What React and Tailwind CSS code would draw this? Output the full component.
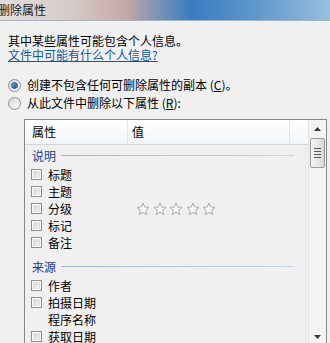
import React from "react";

const font = "[font-family:'Noto_Sans_CJK_SC','Liberation_Sans',sans-serif]";

function Checkbox() {
  return (
    <div className="w-[11px] h-[11px] border border-[#8e8f8f] bg-white p-[1px] shrink-0">
      <div className="w-full h-full bg-gradient-to-br from-[#d4d4d4] to-[#f6f6f6] border border-[#e0e0e0]" />
    </div>
  );
}

function Star() {
  return (
    <svg width="14" height="14" viewBox="0 0 14 14" className="shrink-0">
      <polygon
        points="7,1 8.7,5 13,5.3 9.7,8.2 10.7,12.6 7,10.3 3.3,12.6 4.3,8.2 1,5.3 5.3,5"
        fill="#fbfbfb"
        stroke="#a8a8a8"
        strokeWidth="1"
        strokeLinejoin="round"
      />
    </svg>
  );
}

function Row({ label, check = true, stars = false }) {
  return (
    <div className="flex h-[17px] items-center shrink-0">
      <div className="w-[104px] flex items-center pl-[6px] gap-[6px]">
        {check ? <Checkbox /> : <div className="w-[11px] shrink-0" />}
        <span className="text-[12px] leading-[17px] text-black">{label}</span>
      </div>
      {stars && (
        <div className="flex pl-[7px] gap-[2.5px]">
          <Star />
          <Star />
          <Star />
          <Star />
          <Star />
        </div>
      )}
    </div>
  );
}

function Group({ label, className = "" }) {
  return (
    <div className={`flex h-[21px] items-center pl-[7px] pr-[11px] shrink-0 ${className}`}>
      <span className="text-[12px] leading-[14px] text-[#1e3c8c]">{label}</span>
      <div className="flex-1 h-px ml-[5px] bg-gradient-to-r from-[#9fb6cf] to-[#c7d6e4]" />
    </div>
  );
}

function Radio({ checked }) {
  return (
    <div className="w-[13px] h-[13px] rounded-full border border-[#8e8f8f] bg-gradient-to-br from-[#d8d8d8] to-[#fbfbfb] flex items-center justify-center shrink-0">
      {checked && (
        <div className="w-[7px] h-[7px] rounded-full bg-gradient-to-br from-[#6fa4e0] to-[#1e4e9c] border border-[#2b5aa0]" />
      )}
    </div>
  );
}

export default function App() {
  return (
    <div className={`w-[330px] h-[343px] overflow-hidden bg-[#f0f0f0] ${font} text-black`}>
      <div className="h-[21px] border-b border-[#a9b4c0] bg-[linear-gradient(to_right,#e2dedc_0%,#d6cac8_22%,#c6a8a6_38%,#7a93b8_48%,#3a7cbf_58%,#5f99cc_78%,#98bfe0_100%)] flex items-center">
        <span className="ml-[-2px] text-[12px] leading-[14px] text-[#1a1a1a]">删除属性</span>
      </div>
      <div className="pl-[8px] pt-[13px]">
        <div className="text-[12px] leading-[14px] h-[14px]">其中某些属性可能包含个人信息。</div>
        <div className="text-[12px] leading-[14px] h-[14px] text-[#0b5aa6] underline underline-offset-[1px]">
          文件中可能有什么个人信息?
        </div>
        <div className="mt-[14px] flex items-center h-[18px] gap-[6px]">
          <Radio checked />
          <span className="text-[12px] leading-[14px]">
            创建不包含任何可删除属性的副本 (<u>C</u>)。
          </span>
        </div>
        <div className="flex items-center h-[18px] gap-[6px]">
          <Radio />
          <span className="text-[12px] leading-[14px]">
            从此文件中删除以下属性 (<u>R</u>):
          </span>
        </div>
      </div>
      <div className="ml-[24px] mr-[3px] mt-[7px] h-[228px] border border-[#828790] bg-[#f0f0f0] flex overflow-hidden">
        <div className="flex-1 flex flex-col overflow-hidden">
          <div className="h-[25px] flex border-b border-[#d5d5d5] bg-gradient-to-b from-white to-[#f4f5f7] shrink-0">
            <div className="w-[103px] border-r border-[#e3e5e8] flex items-center pl-[7px] text-[12px]">属性</div>
            <div className="w-[162px] border-r border-[#e3e5e8] flex items-center pl-[4px] text-[12px]">值</div>
            <div className="flex-1" />
          </div>
          <div className="flex-1 flex flex-col border-r border-[#e8e8e8] mr-[2px]">
            <Group label="说明" />
            <Row label="标题" />
            <Row label="主题" />
            <Row label="分级" stars />
            <Row label="标记" />
            <Row label="备注" />
            <Group label="来源" className="mt-[5px]" />
            <Row label="作者" />
            <Row label="拍摄日期" />
            <Row label="程序名称" check={false} />
            <Row label="获取日期" />
          </div>
        </div>
        <div className="w-[18px] border-l border-[#e2e2e2] bg-[#f3f3f3] flex flex-col items-center">
          <div className="h-[18px] w-full flex items-center justify-center">
            <svg width="7" height="4" viewBox="0 0 7 4">
              <polygon points="3.5,0 7,4 0,4" fill="#3a3a3a" />
            </svg>
          </div>
          <div className="w-[15px] h-[30px] rounded-[2px] border border-[#9c9c9c] bg-gradient-to-r from-[#f4f4f4] via-[#e8e8e8] to-[#d6d6d6] flex flex-col items-center justify-center gap-[2px]">
            <div className="w-[7px] h-px bg-[#5a5a5a]" />
            <div className="w-[7px] h-px bg-[#5a5a5a]" />
            <div className="w-[7px] h-px bg-[#5a5a5a]" />
            <div className="w-[7px] h-px bg-[#5a5a5a]" />
          </div>
          <div className="flex-1" />
          <div className="h-[19px] w-full flex items-center justify-center">
            <svg width="7" height="4" viewBox="0 0 7 4">
              <polygon points="0,0 7,0 3.5,4" fill="#3a3a3a" />
            </svg>
          </div>
        </div>
      </div>
    </div>
  );
}
